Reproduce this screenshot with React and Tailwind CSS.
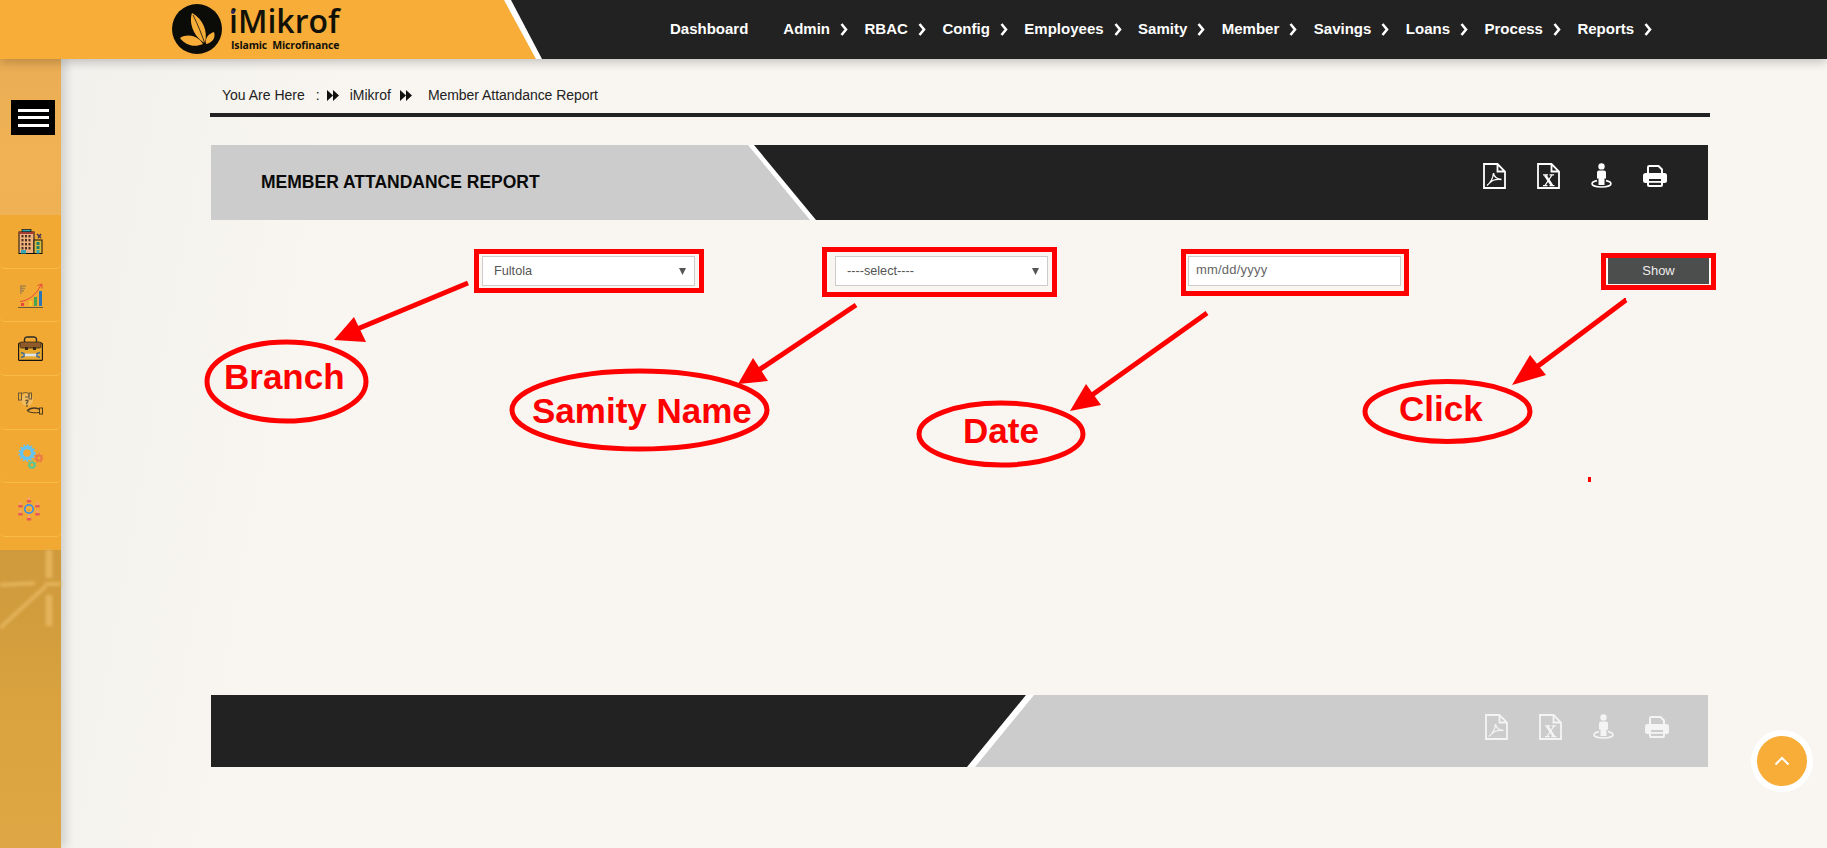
import React from "react";

const NAV = ["Admin", "RBAC", "Config", "Employees", "Samity", "Member", "Savings", "Loans", "Process", "Reports"];

function Chevron() {
  return (
    <svg width="8" height="13" viewBox="0 0 8 13" className="ml-[10px] mr-[16.5px]" aria-hidden="true">
      <path d="M1.5 1 L6 6.5 L1.5 12" fill="none" stroke="#fff" strokeWidth="2.6" />
    </svg>
  );
}

function Forward() {
  return (
    <svg width="12" height="11" viewBox="0 0 12 11" aria-hidden="true">
      <path d="M0 0 L6 5.5 L0 11 Z M6 0 L12 5.5 L6 11 Z" fill="#111" />
    </svg>
  );
}

function PdfIcon({ c }) {
  return (
    <svg width="23" height="26" viewBox="0 0 23 26" aria-hidden="true">
      <path d="M1 1 H14.5 L22 8.5 V25 H1 Z M14.5 1 V8.5 H22" fill="none" stroke={c} strokeWidth="1.8" />
      <path d="M4 22.5 C7 20 10 15 10.5 10 C11 14 14 16 18.5 16.5 C14 16 9 17 6.5 20" fill="none" stroke={c} strokeWidth="1.3" />
    </svg>
  );
}

function XlsIcon({ c }) {
  return (
    <svg width="23" height="26" viewBox="0 0 23 26" aria-hidden="true">
      <path d="M1 1 H14.5 L22 8.5 V25 H1 Z M14.5 1 V8.5 H22" fill="none" stroke={c} strokeWidth="1.8" />
      <path d="M8 12 L15 22.5" fill="none" stroke={c} strokeWidth="2.6" />
      <path d="M15 12 L8 22.5 M6 11.8 H11 M12.5 11.8 H17 M6 22.6 H10.5 M12.5 22.6 H17.5" fill="none" stroke={c} strokeWidth="1.3" />
    </svg>
  );
}

function StreetIcon({ c }) {
  return (
    <svg width="21" height="25" viewBox="0 0 21 25" aria-hidden="true">
      <circle cx="10.5" cy="3.4" r="3.2" fill={c} />
      <path d="M8 7.5 H13 A2 2 0 0 1 15 9.5 V15.5 H13.5 V22 H7.5 V15.5 H6 V9.5 A2 2 0 0 1 8 7.5 Z" fill={c} />
      <path d="M6 17.6 C2.8 18.3 1 19.5 1 20.8 C1 22.7 5.2 24 10.5 24 C15.8 24 20 22.7 20 20.8 C20 19.5 18.2 18.3 15 17.6" fill="none" stroke={c} strokeWidth="1.6" />
    </svg>
  );
}

function PrintIcon({ c, bg }) {
  return (
    <svg width="24" height="22" viewBox="0 0 24 22" className="mt-[2px]" aria-hidden="true">
      <path d="M5 9 V2.2 A1.2 1.2 0 0 1 6.2 1 H15.5 L19 4.5 V9" fill="none" stroke={c} strokeWidth="2" />
      <rect x="0" y="8" width="24" height="10" rx="2.5" fill={c} />
      <rect x="5" y="13" width="14" height="8" rx="1" fill={bg} stroke={c} strokeWidth="2" />
      <rect x="5" y="16" width="14" height="1.8" fill={c} />
    </svg>
  );
}

function Leaves() {
  return (
    <svg width="50" height="52" viewBox="0 0 50 52" className="shrink-0" aria-hidden="true">
      <circle cx="25" cy="26" r="25" fill="#0b0b08" />
      <path d="M20 10 C31 16 36 28 33 40 C24 36 16 22 20 10 Z" fill="#f7ad38" />
      <path d="M8 35 C16 30 26 33 31 41 C22 45 13 42 8 35 Z" fill="#f7ad38" />
      <path d="M42 29 C44 35 40 40 34 41 C33 35 36 31 42 29 Z" fill="#f7ad38" />
      <path d="M21 12 C26 22 30 32 33 41" fill="none" stroke="#0b0b08" strokeWidth="0.8" />
    </svg>
  );
}

function BuildingIcon() {
  const win = [];
  for (let y = 6; y < 21; y += 4) for (let x = 3.5; x < 13; x += 3.5) win.push(<rect key={x + "-" + y} x={x} y={y} width="2" height="2.4" fill="#4a2e22" />);
  return (
    <svg width="25" height="25" viewBox="0 0 25 25" aria-hidden="true">
      <rect x="4" y="0.5" width="9" height="2.5" fill="#35a7b5" stroke="#111" strokeWidth="0.7" />
      <rect x="1" y="3" width="15" height="21.5" fill="#efb07c" stroke="#111" strokeWidth="1" />
      <rect x="1" y="3" width="15" height="2" fill="#a43c35" />
      {win}
      <rect x="3" y="21" width="5" height="3.5" fill="#35a7b5" />
      <rect x="16" y="11" width="8" height="13.5" fill="#d9bb3c" stroke="#111" strokeWidth="1" />
      <rect x="18.5" y="13" width="3" height="3" fill="#1e7f70" />
      <rect x="18.5" y="17" width="3" height="3" fill="#1e7f70" />
      <rect x="18.5" y="21" width="3" height="3.5" fill="#35a7b5" />
      <path d="M19 5 L23 9 M20 9 L23 5" stroke="#4a3a55" strokeWidth="1.6" />
    </svg>
  );
}

function ChartIcon() {
  return (
    <svg width="25" height="25" viewBox="0 0 25 25" aria-hidden="true">
      <path d="M2 3 H8 M2 5.5 H7 M2 8 H6 M3 3 V11" stroke="#a8844a" strokeWidth="1.4" fill="none" />
      <rect x="3" y="20" width="3" height="3" fill="#e8483c" />
      <rect x="11" y="18" width="3" height="5" fill="#f3c82c" />
      <rect x="16" y="14" width="3" height="9" fill="#46a552" />
      <rect x="21" y="8" width="3" height="15" fill="#2a74b8" />
      <path d="M2 18.5 C10 18 18 12 23 2" fill="none" stroke="#e8483c" strokeWidth="1" />
      <path d="M19.5 2.5 L24 1 L24 5.5" fill="none" stroke="#e8483c" strokeWidth="1" />
      <rect x="0" y="24" width="25" height="1" fill="#6a5a3a" />
    </svg>
  );
}

function ToolboxIcon() {
  return (
    <svg width="25" height="25" viewBox="0 0 25 25" aria-hidden="true">
      <path d="M6.5 7 V3 A2.5 2.5 0 0 1 9 1 H16 A2.5 2.5 0 0 1 18.5 3 V7" fill="none" stroke="#2a2a2a" strokeWidth="1.4" />
      <rect x="0.6" y="7" width="23.8" height="17.4" rx="1" fill="#e8a92f" stroke="#111" strokeWidth="1.1" />
      <rect x="2" y="6" width="21" height="6" rx="1.5" fill="#8e5a2a" stroke="#3a2a14" strokeWidth="0.8" />
      <rect x="7" y="11" width="3" height="3" fill="#3a2a14" />
      <rect x="15" y="11" width="3" height="3" fill="#3a2a14" />
      <path d="M5 19 H20" stroke="#d8e4ee" strokeWidth="2.6" />
      <path d="M3 16.5 L6 17.5 L6 20.5 L3 21.5 M22 16.5 L19 17.5 L19 20.5 L22 21.5" fill="none" stroke="#4a6a8a" strokeWidth="1.5" />
    </svg>
  );
}

function HandsIcon() {
  return (
    <svg width="25" height="25" viewBox="0 0 25 25" aria-hidden="true">
      <circle cx="9" cy="10" r="6" fill="#f2bb5e" />
      <rect x="0.5" y="3" width="3" height="7" fill="none" stroke="#6a5a3a" strokeWidth="1" />
      <path d="M3.5 4 C6 2 9 2 11 4 L11 7 L7 7" fill="none" stroke="#6a5a3a" strokeWidth="1" />
      <rect x="11" y="3" width="2.5" height="6" fill="none" stroke="#6a5a3a" strokeWidth="1" />
      <path d="M7.5 11 C9 9.5 11 10.5 9.5 12 C8 13 8.5 14 9.5 14 M9 15 V17" fill="none" stroke="#5a4a2a" strokeWidth="1.2" />
      <path d="M9 21 C12 18 16 17 21 19" fill="none" stroke="#4a3a22" strokeWidth="1.4" />
      <path d="M10 21.5 C14 23 18 23 21 22.5" fill="none" stroke="#4a3a22" strokeWidth="1" />
      <rect x="21.5" y="18" width="3" height="6" fill="none" stroke="#4a3a22" strokeWidth="1" />
    </svg>
  );
}

function Gear({ cx, cy, r, color, w }) {
  return (
    <g>
      <circle cx={cx} cy={cy} r={r} fill="none" stroke={color} strokeWidth={w} />
      <circle cx={cx} cy={cy} r={r + w / 2 + 0.5} fill="none" stroke={color} strokeWidth={w * 0.55} strokeDasharray="1.8 1.8" />
    </g>
  );
}

function GearsIcon() {
  return (
    <svg width="25" height="25" viewBox="0 0 25 25" aria-hidden="true">
      <Gear cx={9} cy={9} r={5.5} color="#63c3f2" w={3.4} />
      <Gear cx={21} cy={14} r={2.6} color="#e87a4a" w={2} />
      <Gear cx={14} cy={21} r={2.6} color="#52c79a" w={1.8} />
    </svg>
  );
}

function PeopleIcon() {
  const pts = [[11, 3], [2.5, 8], [19.5, 8], [2.5, 16], [19.5, 16], [11, 21]];
  return (
    <svg width="22" height="25" viewBox="0 0 22 25" aria-hidden="true">
      {pts.map(([x, y]) => (
        <g key={x + "-" + y}>
          <circle cx={x} cy={y - 1.5} r="1.3" fill="#f6a27a" />
          <rect x={x - 2.2} y={y} width="4.4" height="2.6" rx="0.6" fill="#e85a5a" />
        </g>
      ))}
      <circle cx="11" cy="12" r="4.2" fill="#f4b03a" stroke="#3f8fe8" strokeWidth="1.8" />
      <path d="M9 14 C9 11.5 13 11.5 13 14 Z M11 8.8" fill="#e2a227" />
    </svg>
  );
}

const SIDE = [BuildingIcon, ChartIcon, ToolboxIcon, HandsIcon, GearsIcon, PeopleIcon];

function Select({ value }) {
  return (
    <div className="relative w-[213px] h-[30px]">
      <select
        defaultValue={value}
        className="w-full h-full appearance-none bg-white border border-[#cccccc] pl-[11px] pt-[1px] text-[12.7px] text-[#555555] font-['Liberation_Sans',sans-serif]"
      >
        <option>{value}</option>
      </select>
      <svg width="7" height="7" viewBox="0 0 7 7" className="absolute right-[9px] top-[12px]" aria-hidden="true">
        <path d="M0 0 H7 L3.5 7 Z" fill="#555555" />
      </svg>
    </div>
  );
}

function Label({ className, children }) {
  return (
    <span className={"absolute text-[35px] leading-none font-bold text-[#ff0000] whitespace-nowrap " + className}>{children}</span>
  );
}

function Annotations() {
  const R = "#ff0000";
  return (
    <svg width="1827" height="848" viewBox="0 0 1827 848" className="absolute left-0 top-0 pointer-events-none" aria-hidden="true">
      <g fill="none" stroke={R} strokeWidth="5">
        <rect x="476.5" y="251.5" width="225" height="39" />
        <rect x="824.5" y="249.5" width="230" height="45" />
        <rect x="1183.5" y="251.5" width="223" height="42" />
        <rect x="1603.5" y="255.5" width="110" height="32" />
      </g>
      <g fill="none" stroke={R} strokeWidth="5">
        <ellipse cx="286.5" cy="381.5" rx="79.5" ry="39.5" />
        <ellipse cx="639.5" cy="410" rx="127.5" ry="39" />
        <ellipse cx="1001" cy="434" rx="82" ry="31" />
        <ellipse cx="1447.5" cy="411.5" rx="82.5" ry="30" />
      </g>
      <g stroke={R} strokeWidth="5">
        <line x1="468" y1="283" x2="350" y2="332" />
        <line x1="856" y1="305" x2="750" y2="376" />
        <line x1="1207" y1="313" x2="1085" y2="400" />
        <line x1="1626" y1="300" x2="1530" y2="372" />
      </g>
      <g fill={R}>
        <polygon points="334,340 354,317 366,342" />
        <polygon points="738,384 753,358 768,381" />
        <polygon points="1070,411 1086,384 1101,405" />
        <polygon points="1512,385 1530,355 1546,375" />
        <rect x="1624" y="298" width="2" height="3" />
        <rect x="1588" y="477" width="3" height="5" />
      </g>
    </svg>
  );
}

export default function App() {
  return (
    <div className="relative w-[1827px] h-[848px] overflow-hidden bg-[#f9f6f1] font-['Liberation_Sans',Arial,sans-serif]">
      {/* top bar */}
      <header className="relative z-10 flex items-center h-[59px] bg-[#222222] shadow-[0_3px_10px_rgba(0,0,0,0.22)]">
        <div className="w-[542px] h-full shrink-0 bg-white [clip-path:polygon(0_0,511px_0,100%_100%,0_100%)]">
          <div className="flex items-start h-full pl-[172px] pt-[3px] bg-[#f7ad38] [clip-path:polygon(0_0,504px_0,536px_100%,0_100%)]">
            <Leaves />
            <div className="relative ml-[7px] flex flex-col font-['Open_Sans',sans-serif] text-[#111108]">
              <span className="text-[32px] leading-[30px] font-semibold mt-[3px]">iMikrof</span>
              <span className="absolute left-[2px] top-[7px] w-[4px] h-[4px] rounded-full bg-[#28285e]" />
              <span className="text-[10.5px] leading-[12px] font-bold tracking-[-0.15px] ml-[2px] mt-[3px] whitespace-pre">Islamic  Microfinance</span>
            </div>
          </div>
        </div>
        <nav className="flex items-center ml-[128px] text-[15px] font-bold text-white">
          <span className="mr-[35px]">Dashboard</span>
          {NAV.map((n) => (
            <span key={n} className="flex items-center">
              {n}
              <Chevron />
            </span>
          ))}
        </nav>
      </header>

      <div className="flex h-[789px]">
        {/* sidebar */}
        <aside className="relative z-[5] flex flex-col w-[61px] shrink-0 shadow-[5px_0_9px_rgba(0,0,0,0.14)]">
          <div className="h-[156px] pl-[11px] pt-[41px] bg-[linear-gradient(180deg,#eaad55_0%,#f0b254_60%,#eeb153_100%)]">
            <button className="flex flex-col items-center justify-center gap-[4.5px] w-[44px] h-[35px] bg-black" aria-label="menu">
              <span className="block w-[31px] h-[3px] bg-white" />
              <span className="block w-[31px] h-[3px] bg-white" />
              <span className="block w-[31px] h-[3px] bg-white" />
            </button>
          </div>
          <div className="h-[335px] bg-[#f1a933]">
            {SIDE.map((Icon, i) => (
              <div key={i} className="h-[53.7px] pt-[14px] pl-[18px] border-b border-[#f8bc48] rounded-b-[5px]">
                <Icon />
              </div>
            ))}
          </div>
          <div className="flex-1 bg-[linear-gradient(180deg,#cf9a3c_0%,#d29d3d_25%,#dba340_55%,#dea644_100%)]">
            <svg width="61" height="298" viewBox="0 0 61 298" className="blur-[1.5px]" aria-hidden="true">
              <g stroke="#e3b25a" fill="none">
                <path d="M49 0 V28 M49 45 V76" strokeWidth="7" />
                <path d="M0 35 L35 33 M45 34 H61" strokeWidth="4" />
                <path d="M0 78 L46 36" strokeWidth="4" />
              </g>
            </svg>
          </div>
        </aside>

        {/* main */}
        <main className="flex-1 pl-[149px] bg-[linear-gradient(100deg,#f3f1ed_0%,#f5f3ee_8%,#f9f6f1_16%)]">
          <div className="w-[1500px]">
            <div className="flex items-center h-[58px] pt-[18px] pl-[12px] text-[14px] text-[#222222] border-b-4 border-[#222222]">
              <span>You Are Here</span>
              <span className="ml-[11px] mr-[7px]">:</span>
              <Forward />
              <span className="ml-[11px] mr-[9px]">iMikrof</span>
              <Forward />
              <span className="ml-[16px] tracking-[-0.05px]">Member Attandance Report</span>
            </div>

            {/* heading band */}
            <section className="relative flex items-center justify-end w-[1497px] h-[75px] ml-px mt-[28px] pr-[41px] bg-[#222222] gap-[31px]">
              <div className="absolute left-0 top-0 w-[605px] h-full bg-white [clip-path:polygon(0_0,543px_0,100%_100%,0_100%)]" />
              <div className="absolute left-0 top-0 w-[599px] h-full flex items-center pl-[50px] bg-[#cccccc] [clip-path:polygon(0_0,537px_0,100%_100%,0_100%)]">
                <h1 className="text-[17.5px] font-bold text-[#0a0a0a]">MEMBER ATTANDANCE REPORT</h1>
              </div>
              <span className="flex items-start gap-[31px] mb-[13px]">
                <PdfIcon c="#ffffff" />
                <XlsIcon c="#ffffff" />
                <StreetIcon c="#ffffff" />
                <PrintIcon c="#ffffff" bg="#222222" />
              </span>
            </section>

            {/* form row */}
            <div className="flex items-start ml-[272px] mt-[36px] h-[30px]">
              <Select value="Fultola" />
              <div className="ml-[140px]"><Select value="----select----" /></div>
              <input
                placeholder="mm/dd/yyyy"
                readOnly
                className="ml-[140px] w-[213px] h-[30px] pl-[7px] pb-[3px] bg-white border border-[#cccccc] text-[13px] tracking-[0.2px] placeholder:text-[#666666] outline-none"
              />
              <button className="ml-[206px] mt-[2px] w-[103px] h-[26px] pb-[1px] bg-[#4c4d4d] border-x border-white text-[13px] text-[#ececec]">Show</button>
            </div>

            {/* footer band */}
            <section className="relative flex items-center justify-end w-[1497px] h-[72px] ml-px mt-[409px] pr-[39px] bg-[#cccccc]">
              <div className="absolute left-0 top-0 w-[823px] h-full bg-white [clip-path:polygon(0_0,100%_0,764px_100%,0_100%)]" />
              <div className="absolute left-0 top-0 w-[815px] h-full bg-[#222222] [clip-path:polygon(0_0,100%_0,756px_100%,0_100%)]" />
              <span className="flex items-start gap-[31px] mb-[8px]">
                <PdfIcon c="#f4f4f4" />
                <XlsIcon c="#f4f4f4" />
                <StreetIcon c="#f4f4f4" />
                <PrintIcon c="#f4f4f4" bg="#cccccc" />
              </span>
            </section>
          </div>
        </main>
      </div>

      <Annotations />
      <Label className="left-[224px] top-[359px]">Branch</Label>
      <Label className="left-[532px] top-[393px]">Samity Name</Label>
      <Label className="left-[963px] top-[413px]">Date</Label>
      <Label className="left-[1399px] top-[391px]">Click</Label>

      {/* back to top */}
      <button className="absolute left-[1751px] top-[730px] flex items-center justify-center w-[62px] h-[62px] rounded-full bg-[#f7ad38] border-[6px] border-white" aria-label="top">
        <svg width="16" height="10" viewBox="0 0 16 10" aria-hidden="true">
          <path d="M1.5 8.5 L8 2 L14.5 8.5" fill="none" stroke="#fff" strokeWidth="2" />
        </svg>
      </button>
    </div>
  );
}
